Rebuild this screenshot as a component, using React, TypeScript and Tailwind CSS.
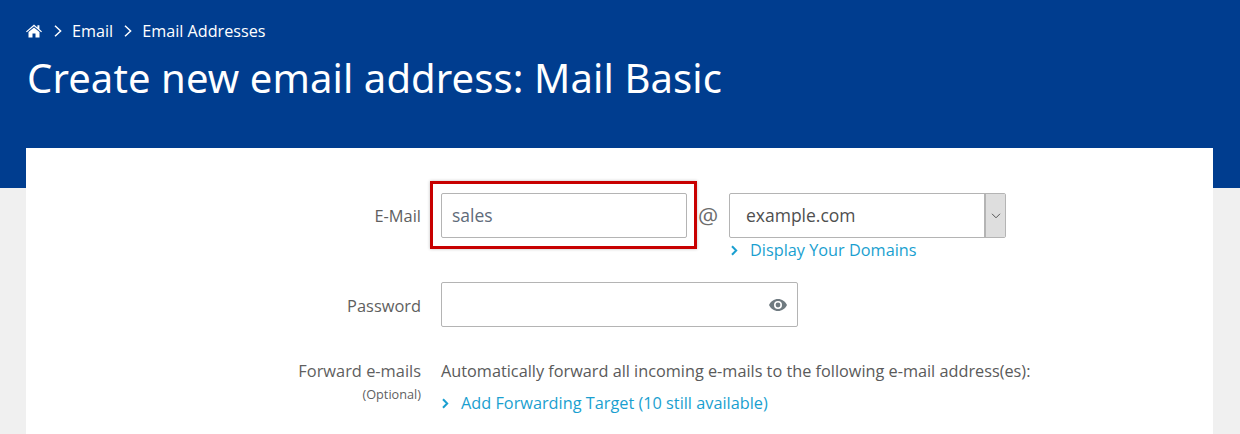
const LinkRow = ({ label }: { label: string }) => (
  <a className="flex items-center text-[16.3px] leading-[22px] text-[#1a9fd0]">
    <svg className="w-[9px] h-[11px] mr-[11px]" viewBox="0 0 9 11" fill="none" stroke="#1a9fd0" strokeWidth="2">
      <path d="M2 1.2l4.2 4.3L2 9.8" />
    </svg>
    {label}
  </a>
);

const Crumb = ({ className }: { className: string }) => (
  <svg className={`w-[8px] h-[12px] ${className}`} viewBox="0 0 8 12" fill="none" stroke="white" strokeWidth="1.5">
    <path d="M1 0.8L6.6 6 1 11.2" />
  </svg>
);

export default function App() {
  return (
    <div className="h-[434px] overflow-hidden bg-[#f0f0f0] font-['Open_Sans',sans-serif] text-[#5f5f5f]">
      <header className="h-[188px] bg-[#003d8f] px-[26px] pt-[20px] text-white">
        <nav className="flex h-[22px] items-center text-[16.2px] leading-[22px]">
          <svg className="w-[16px] h-[14px]" viewBox="0 0 16 14" fill="white">
            <path d="M8 0.5L0 7.4l0.8 0.9L8 2.2l7.2 6.1 0.8-0.9-2.6-2.3V1.2h-2v2.4L8 0.5z" />
            <path d="M8 3.4L2.5 8v5.5h4V9.6h3v3.9h4V8L8 3.4z" />
          </svg>
          <Crumb className="ml-[12px] mr-[10px]" />
          <span>Email</span>
          <Crumb className="ml-[11px] mr-[10px]" />
          <span>Email Addresses</span>
        </nav>
        <h1 className="mt-[10px] pl-[1px] text-[40px] leading-[52px] font-normal tracking-[0.1px] font-['Noto_Sans',sans-serif]">
          Create new email address: Mail Basic
        </h1>
      </header>

      <main className="relative mx-[26px] -mt-[40px] w-[1187px] h-[300px] bg-white pt-[45px]">
        <div className="grid grid-cols-[395px_1fr] gap-x-[20px]">
          <label className="h-[45px] pt-[2px] flex items-center justify-end text-[16.4px]">E-Mail</label>
          <div>
            <div className="flex items-center">
              <div className="relative">
                <div className="flex h-[45px] w-[246px] items-center rounded-[2px] border border-[#b4b4b4] px-[10px] text-[17.5px] text-[#5f6b7a]">
                  sales
                </div>
                <div className="absolute -left-[11px] -top-[12px] h-[68px] w-[267px] border-[3px] border-[#c80000] shadow-[0_0_3px_rgba(0,0,0,0.25)]" />
              </div>
              <span className="ml-[11px] mr-[10px] w-[21px] text-[22.5px] leading-[26px] text-[#6d6d6d]">@</span>
              <div className="flex h-[45px] w-[277px] rounded-[2px] border border-[#b4b4b4]">
                <span className="flex flex-1 items-center pl-[16px] text-[17.5px] text-[#4f4f4f]">example.com</span>
                <span className="flex w-[21px] items-center justify-center border-l-2 border-[#b4b4b4] bg-[#dedede]">
                  <svg className="w-[10px] h-[6px]" viewBox="0 0 10 6" fill="none" stroke="#555" strokeWidth="1">
                    <path d="M1 0.8l4 4 4-4" />
                  </svg>
                </span>
              </div>
            </div>
            <div className="ml-[289px] mt-[1px]">
              <LinkRow label="Display Your Domains" />
            </div>
          </div>

          <label className="mt-[21px] h-[45px] pt-[3px] flex items-center justify-end text-[16.4px]">Password</label>
          <div className="mt-[21px] flex h-[45px] w-[357px] items-center justify-end rounded-[2px] border border-[#b4b4b4] pr-[10px]">
            <svg className="w-[18px] h-[12px]" viewBox="0 0 18 12" fill="#6f7a80">
              <path fillRule="evenodd" d="M9 0C5 0 1.7 2.4 0 6c1.7 3.6 5 6 9 6s7.3-2.4 9-6c-1.7-3.6-5-6-9-6zm0 10a4 4 0 110-8 4 4 0 010 8z" />
              <circle cx="9" cy="6" r="2.4" />
            </svg>
          </div>

          <div className="mt-[33px] flex flex-col items-end">
            <span className="text-[16.4px] leading-[22px]">Forward e-mails</span>
            <span className="mt-[4px] text-[12.7px] leading-[17px]">(Optional)</span>
          </div>
          <div className="mt-[33px]">
            <p className="text-[16.28px] leading-[22px] text-[#5a5a5a]">
              Automatically forward all incoming e-mails to the following e-mail address(es):
            </p>
            <div className="mt-[10px]">
              <LinkRow label="Add Forwarding Target (10 still available)" />
            </div>
          </div>
        </div>
      </main>
    </div>
  );
}
